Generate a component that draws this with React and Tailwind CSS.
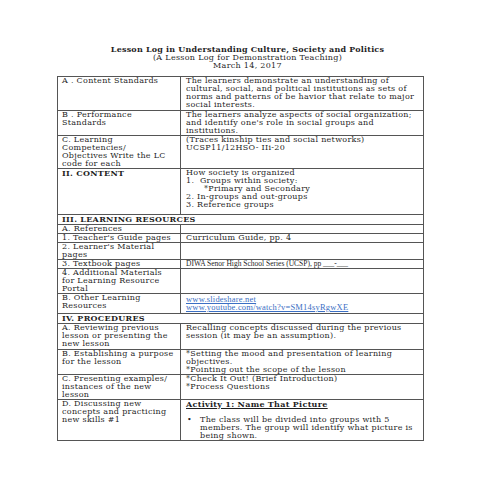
const rows = [
  { left: <>A . Content Standards</>, right: <>The learners demonstrate an understanding of<br />cultural, social, and political institutions as sets of<br />norms and patterns of be havior that relate to major<br />social interests.</>, h: 'h-[34px]' },
  { left: <>B . Performance<br />Standards</>, right: <>The learners analyze aspects of social organization;<br />and identify one's role in social groups and<br />institutions.</>, h: 'h-[24px]' },
  { left: <>C. Learning<br />Competencies/<br />Objectives Write the LC<br />code for each</>, right: <>(Traces kinship ties and social networks)<br />UCSP11/12HSO- IIi-20</>, h: 'h-[33px]' },
  { left: <b>II. CONTENT</b>, right: <>How society is organized<br />1.&nbsp;&nbsp;Groups within society:<br /><span className="pl-[18px]">*Primary and Secondary</span><br />2. In-groups and out-groups<br />3. Reference groups</>, h: 'h-[46px]' },
  { span: <b>III. LEARNING RESOURCES</b>, h: 'h-[10px]' },
  { left: <>A. References</>, right: null, h: 'h-[8px]' },
  { left: <>1. Teacher's Guide pages</>, right: <>Curriculum Guide, pp. 4</>, h: 'h-[9px]' },
  { left: <>2. Learner's Material<br />pages</>, right: null, h: 'h-[16px]' },
  { left: <>3. Textbook pages</>, right: <span className="font-['Liberation_Serif',serif] text-[7.5px] tracking-normal">DIWA Senor High School Series (UCSP), pp ___-___</span>, h: 'h-[8px]' },
  { left: <>4. Additional Materials<br />for Learning Resource<br />Portal</>, right: null, h: 'h-[24px]' },
  { left: <>B. Other Learning<br />Resources</>, right: <div className="font-['Liberation_Serif',serif] text-[8.5px] leading-[8.5px] tracking-[0.2px] pt-[1px] text-[#3b6fc4] underline">www.slideshare.net<br />www.youtube.com/watch?v=SM14syRgwXE</div>, h: 'h-[20px]' },
  { span: <b>IV. PROCEDURES</b>, h: 'h-[10px]' },
  { left: <>A. Reviewing previous<br />lesson or presenting the<br />new lesson</>, right: <>Recalling concepts discussed during the previous<br />session (it may be an assumption).</>, h: 'h-[26px]' },
  { left: <>B. Establishing a purpose<br />for the lesson</>, right: <>*Setting the mood and presentation of learning<br />objectives.<br />*Pointing out the scope of the lesson</>, h: 'h-[24px]' },
  { left: <>C. Presenting examples/<br />instances of the new<br />lesson</>, right: <>*Check It Out! (Brief Introduction)<br />*Process Questions</>, h: 'h-[24px]' },
  {
    left: <>D. Discussing new<br />concepts and practicing<br />new skills #1</>,
    right: (
      <div>
        <b className="underline">Activity 1: Name That Picture</b>
        <div className="h-[7px]" />
        <div className="flex">
          <span className="w-[14px] shrink-0 pl-[1px]">•</span>
          <span>The class will be divided into groups with 5<br />members. The group will identify what picture is<br />being shown.</span>
        </div>
      </div>
    ),
    h: 'h-[35px]',
  },
]

export default function App() {
  return (
    <div className="w-[495px] h-[495px] bg-white text-[#1f1f1f] font-['DejaVu_Serif',serif] text-[8px] leading-[8px] tracking-[0.3px] overflow-hidden">
      <div className="pt-[45px] text-center leading-[8.5px]">
        <div className="font-bold tracking-[0.2px]">Lesson Log in Understanding Culture, Society and Politics</div>
        <div>(A Lesson Log for Demonstration Teaching)</div>
        <div>March 14, 2017</div>
      </div>
      <table className="ml-[57px] mt-[5px] w-[366px] border-collapse border border-[#444] table-fixed">
        <colgroup>
          <col className="w-[123px]" />
          <col className="w-[243px]" />
        </colgroup>
        <tbody>
          {rows.map((r, i) =>
            r.span ? (
              <tr key={i} className={r.h}>
                <td colSpan={2} className="border border-[#555] px-[4px] align-top whitespace-nowrap">{r.span}</td>
              </tr>
            ) : (
              <tr key={i} className={r.h}>
                <td className="border border-[#555] px-[4px] align-top whitespace-nowrap">{r.left}</td>
                <td className="border border-[#555] px-[5px] align-top whitespace-nowrap">{r.right}</td>
              </tr>
            )
          )}
        </tbody>
      </table>
    </div>
  )
}
